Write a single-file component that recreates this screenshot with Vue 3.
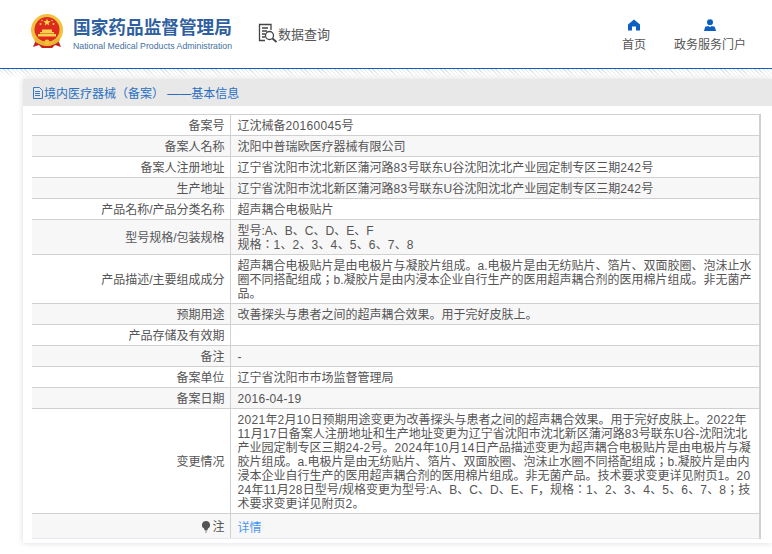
<script setup>
const rows = [
  { k: '备案号', v: ['辽沈械备20160045号'] },
  { k: '备案人名称', v: ['沈阳中普瑞欧医疗器械有限公司'] },
  { k: '备案人注册地址', v: ['辽宁省沈阳市沈北新区蒲河路83号联东U谷沈阳沈北产业园定制专区三期242号'] },
  { k: '生产地址', v: ['辽宁省沈阳市沈北新区蒲河路83号联东U谷沈阳沈北产业园定制专区三期242号'] },
  { k: '产品名称/产品分类名称', v: ['超声耦合电极贴片'] },
  { k: '型号规格/包装规格', v: ['型号:A、B、C、D、E、F', '规格：1、2、3、4、5、6、7、8'] },
  { k: '产品描述/主要组成成分', v: [
    '超声耦合电极贴片是由电极片与凝胶片组成。a.电极片是由无纺贴片、箔片、双面胶圈、泡沫止水',
    '圈不同搭配组成；b.凝胶片是由内浸本企业自行生产的医用超声耦合剂的医用棉片组成。非无菌产',
    '品。',
  ] },
  { k: '预期用途', v: ['改善探头与患者之间的超声耦合效果。用于完好皮肤上。'] },
  { k: '产品存储及有效期', v: [] },
  { k: '备注', v: ['-'] },
  { k: '备案单位', v: ['辽宁省沈阳市市场监督管理局'] },
  { k: '备案日期', v: ['2016-04-19'] },
  { k: '变更情况', v: [
    '2021年2月10日预期用途变更为改善探头与患者之间的超声耦合效果。用于完好皮肤上。2022年',
    '11月17日备案人注册地址和生产地址变更为辽宁省沈阳市沈北新区蒲河路83号联东U谷-沈阳沈北',
    '产业园定制专区三期24-2号。2024年10月14日产品描述变更为超声耦合电极贴片是由电极片与凝',
    '胶片组成。a.电极片是由无纺贴片、箔片、双面胶圈、泡沫止水圈不同搭配组成；b.凝胶片是由内',
    '浸本企业自行生产的医用超声耦合剂的医用棉片组成。非无菌产品。技术要求变更详见附页1。20',
    '24年11月28日型号/规格变更为型号:A、B、C、D、E、F，规格：1、2、3、4、5、6、7、8；技',
    '术要求变更详见附页2。',
  ] },
]
const runs = (s) => s.split(/(\d+)/).filter(Boolean).map((t) => ({ t, num: /^\d/.test(t) }))
</script>

<template>
  <div class="page">
    <header class="top">
      <div class="brand">
        <svg class="emblem" viewBox="0 0 34 36" width="34" height="36">
          <path d="M6 26 L3 33 L9 31 L12 34 L22 34 L25 31 L31 33 L28 26 Z" fill="#c8201c" />
          <circle cx="17" cy="16" r="16" fill="#f3c23c" />
          <circle cx="17" cy="15.5" r="12.5" fill="#dc2a1f" />
          <path d="M17 4.5l1 2.6 2.7.1-2.1 1.7.7 2.6-2.3-1.5-2.3 1.5.7-2.6-2.1-1.7 2.7-.1z" fill="#f7d24a" />
          <circle cx="10.5" cy="10" r="1" fill="#f7d24a" />
          <circle cx="23.5" cy="10" r="1" fill="#f7d24a" />
          <circle cx="12" cy="6.5" r="0.8" fill="#f7d24a" />
          <circle cx="22" cy="6.5" r="0.8" fill="#f7d24a" />
          <path d="M10 18h14v1.5H10zM12 15.5h10V18H12zM8 20h18v2.5H8z" fill="#f7d24a" />
          <path d="M6 23c3 6 19 6 22 0l2 3c-4 7-22 7-26 0z" fill="#eab534" />
          <circle cx="17" cy="28" r="2.4" fill="#f3c23c" />
        </svg>
        <div class="brand-text">
          <div class="cn">国家药品监督管理局</div>
          <div class="en">National Medical Products Administration</div>
        </div>
      </div>
      <div class="query">
        <svg viewBox="0 0 20 20" width="20" height="20" fill="none" stroke="#444" stroke-width="1.3">
          <path d="M13 7V1.5H1.5v16H7" />
          <path d="M4 5h6M4 8h5M4 11h3M4 14h3" />
          <circle cx="11.5" cy="12.5" r="4" />
          <path d="M14.5 15.5l4 3.5" stroke-width="1.8" />
        </svg>
        <span>数据查询</span>
      </div>
      <nav class="nav">
        <div class="nav-item home">
          <svg viewBox="0 0 12 11" width="12" height="11">
            <path d="M6 0L0 5v6h4V7h4v4h4V5z" fill="#0a5fc0" />
          </svg>
          <span>首页</span>
        </div>
        <div class="nav-item">
          <svg viewBox="0 0 12 12" width="12" height="12">
            <circle cx="6" cy="3.2" r="3" fill="#0a5fc0" />
            <path d="M0 12l1.2-4.2L4.5 7 6 8.2 7.5 7l3.3.8L12 12z" fill="#0a5fc0" />
          </svg>
          <span>政务服务门户</span>
        </div>
      </nav>
    </header>
    <div class="stripe"></div>
    <section class="card">
      <div class="card-title">
        <svg viewBox="0 0 10 12" width="10" height="12" fill="none" stroke="#3a78c8" stroke-width="1">
          <path d="M.5.5h6l3 3v8h-9z" />
          <path d="M2 4.5h5M2 6.5h5M2 8.5h5" />
        </svg>
        <span>境内医疗器械（备案） ——基本信息</span>
      </div>
      <table class="info">
        <tbody>
          <tr v-for="r in rows" :key="r.k">
            <th>{{ r.k }}</th>
            <td>
              <div v-for="(line, n) in r.v" :key="n" class="line">
                <span v-for="(p, i) in runs(line)" :key="i" :class="{ num: p.num }">{{ p.t }}</span>
              </div>
              <div v-if="!r.v.length" class="line">&nbsp;</div>
            </td>
          </tr>
          <tr class="last">
            <th>
              <span class="note">
                <svg viewBox="0 0 8 12" width="8" height="12">
                  <path d="M4 0a4 4 0 0 1 2 7.5L5.2 9.5H2.8L2 7.5A4 4 0 0 1 4 0z" fill="#555" />
                  <path d="M3 10.5h2v1H3z" fill="#888" />
                </svg>注
              </span>
            </th>
            <td><a class="link">详情</a></td>
          </tr>
        </tbody>
      </table>
    </section>
  </div>
</template>

<style scoped>
.page {
  width: 772px;
  height: 554px;
  overflow: hidden;
  background: #fff;
  font-family: "Liberation Sans", "Noto Sans CJK SC", sans-serif;
}
.top {
  box-sizing: border-box;
  display: flex;
  align-items: flex-start;
  border-bottom: 1px solid #0a62c4;
  height: 69px;
}
.brand {
  display: flex;
  align-items: flex-start;
  margin: 14px 0 0 30px;
}
.emblem {
  flex: none;
}
.brand-text {
  margin-left: 9px;
  color: #2f5f9e;
}
.cn {
  font-size: 17.67px;
  line-height: 24px;
  font-weight: 700;
  margin-top: 2px;
  white-space: nowrap;
}
.en {
  font-size: 8.75px;
  line-height: 12px;
  margin-top: 0;
  white-space: nowrap;
  color: #44709f;
}
.query {
  display: flex;
  align-items: center;
  margin: 23px 0 0 26px;
  font-size: 13px;
  color: #555;
}
.nav {
  margin-left: auto;
  display: flex;
  margin-right: 26px;
  margin-top: 19px;
}
.nav-item {
  display: flex;
  flex-direction: column;
  align-items: center;
  font-size: 12px;
  color: #555;
}
.nav-item svg {
  height: 12px;
}
.nav-item span {
  margin-top: 7px;
  line-height: 14px;
}
.home {
  margin-right: 28px;
}
.stripe {
  height: 10px;
  background-image: linear-gradient(#fff0, #fff 90%), repeating-linear-gradient(45deg, #ddd 0 1px, #fff 1px 3px);
}
.card {
  margin-left: 23px;
  width: 749px;
  height: 464px;
  background: #fff;
  box-shadow: 0 0 6px rgba(0, 0, 0, 0.15);
}
.card-title {
  height: 27px;
  background: #e8e8e8;
  display: flex;
  align-items: center;
  padding-left: 10px;
  font-size: 12px;
  color: #2a6fc0;
}
.card-title span {
  margin-left: 1px;
  white-space: pre;
}
.info {
  margin: 8px 0 0 9px;
  width: 729px;
  border-collapse: collapse;
  font-family: "Liberation Sans", "Noto Sans CJK JP", sans-serif;
  font-size: 12px;
  line-height: 14px;
  color: #555;
  table-layout: fixed;
}
.info th {
  width: 198px;
  box-sizing: border-box;
  font-weight: 400;
  text-align: right;
  padding: 4px 5px 2px 0;
  border: 1px solid #d0d0d0;
  border-left: 0;
}
.info td {
  padding: 4px 7px 2px 7px;
  border: 1px solid #d0d0d0;
  border-right: 2px solid #d0d0d0;
}
.line {
  white-space: nowrap;
  height: 14px;
}
.info tr:nth-child(2n) {
  background: #f7f7f7;
}
.num {
  letter-spacing: 0.33px;
}
.info .last th, .info .last td {
  padding-top: 6px;
  border-bottom-color: #e8e8f0;
}
.note {
  display: inline-flex;
  align-items: center;
  gap: 2px;
}
.link {
  color: #4b96ee;
}
</style>
